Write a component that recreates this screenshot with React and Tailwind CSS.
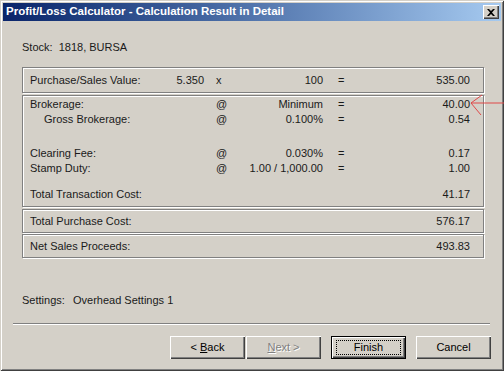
import React from 'react'

const font = { fontFamily: '"Liberation Sans", Arial, sans-serif' }

function Row({ label, num, op, rate, eq, value, indent }) {
  return (
    <div className="flex h-[15px] items-center leading-[15px]">
      <div className={`w-[145px] ${indent ? 'pl-[14px]' : ''}`}>{label}</div>
      <div className="w-[29px] text-right">{num}</div>
      <div className="w-[22px] pl-[12px]">{op}</div>
      <div className="w-[97px] text-right">{rate}</div>
      <div className="w-[30px] pl-[15px]">{eq}</div>
      <div className="flex-1 pr-[13px] text-right">{value}</div>
    </div>
  )
}

function Group({ children, className = '' }) {
  return (
    <div className={`border border-[#808080] shadow-[inset_1px_1px_0_#fff,1px_1px_0_#fff] pl-[7px] ${className}`}>
      {children}
    </div>
  )
}

function Button({ children, def, disabled }) {
  return (
    <div
      className={`flex h-[23px] w-[75px] items-center justify-center text-[11px] ${
        def
          ? 'border border-black shadow-[inset_1px_1px_0_#fff,inset_-1px_-1px_0_#404040,inset_-2px_-2px_0_#808080]'
          : 'shadow-[inset_1px_1px_0_#fff,inset_-1px_-1px_0_#404040,inset_-2px_-2px_0_#808080]'
      } ${disabled ? 'text-[#808080] [text-shadow:1px_1px_0_#fff]' : 'text-black'}`}
    >
      {def ? (
        <div className="flex h-[15px] w-[65px] items-center justify-center border border-dotted border-black">
          {children}
        </div>
      ) : (
        children
      )}
    </div>
  )
}

export default function App() {
  return (
    <div
      className="relative h-[371px] w-[504px] bg-[#d4d0c8] p-[3px] text-[11px] text-[#1a1a1a] shadow-[inset_1px_1px_0_#d4d0c8,inset_-1px_-1px_0_#404040,inset_2px_2px_0_#fff,inset_-2px_-2px_0_#808080]"
      style={font}
    >
      {/* title bar */}
      <div className="flex h-[18px] items-center justify-between bg-gradient-to-r from-[#0a246a] to-[#a6caf0] pl-[3px] pr-[2px]">
        <span className="text-[11.5px] font-bold text-white">Profit/Loss Calculator - Calculation Result in Detail</span>
        <div className="flex h-[14px] w-[16px] items-center justify-center bg-[#d4d0c8] shadow-[inset_1px_1px_0_#fff,inset_-1px_-1px_0_#404040,inset_-2px_-2px_0_#808080]">
          <svg width="8" height="7" viewBox="0 0 8 7">
            <path d="M0 0h2l2 2 2-2h2L5 3.5 8 7H6L4 5 2 7H0l3-3.5z" fill="#000" />
          </svg>
        </div>
      </div>

      <div className="pl-[19px] pr-[17px]">
        <div className="mt-[20px] h-[13px] leading-[13px]">Stock:&nbsp; 1818, BURSA</div>

        <Group className="mt-[13px] flex h-[26px] flex-col justify-center">
          <Row label="Purchase/Sales Value:" num="5.350" op="x" rate="100" eq="=" value="535.00" />
        </Group>

        <Group className="mt-[2px] h-[112px] pt-[1px]">
          <Row label="Brokerage:" op="@" rate="Minimum" eq="=" value="40.00" />
          <Row label="Gross Brokerage:" indent op="@" rate="0.100%" eq="=" value="0.54" />
          <div className="h-[19px]" />
          <Row label="Clearing Fee:" op="@" rate="0.030%" eq="=" value="0.17" />
          <Row label="Stamp Duty:" op="@" rate="1.00 / 1,000.00" eq="=" value="1.00" />
          <div className="h-[11px]" />
          <Row label="Total Transaction Cost:" value="41.17" />
        </Group>

        <Group className="mt-[2px] flex h-[24px] flex-col justify-center">
          <Row label="Total Purchase Cost:" value="576.17" />
        </Group>

        <Group className="mt-[1px] flex h-[24px] flex-col justify-center">
          <Row label="Net Sales Proceeds:" value="493.83" />
        </Group>

        <div className="mt-[36px] flex h-[13px] leading-[13px]">
          <span className="w-[51px]">Settings:</span>
          <span>Overhead Settings 1</span>
        </div>
      </div>

      <div className="ml-[10px] mr-[11px] mt-[16px] h-[2px] border-t border-b border-t-[#808080] border-b-white" />

      <div className="mt-[11px] flex pr-[10px]">
        <div className="flex-1" />
        <Button>
          &lt; <span className="ml-[3px] underline">B</span>ack
        </Button>
        <div className="ml-[1px]">
          <Button disabled>
            <span className="underline">N</span>ext &gt;
          </Button>
        </div>
        <div className="ml-[10px]">
          <Button def>Finish</Button>
        </div>
        <div className="ml-[10px]">
          <Button>Cancel</Button>
        </div>
      </div>

      {/* red pointer arrow */}
      <svg className="absolute left-[468px] top-[92px]" width="36" height="26" viewBox="0 0 36 26">
        <path d="M3 11H36M3 11L14 3M3 11L13 23" stroke="#e04848" strokeWidth="1" fill="none" />
      </svg>
    </div>
  )
}
